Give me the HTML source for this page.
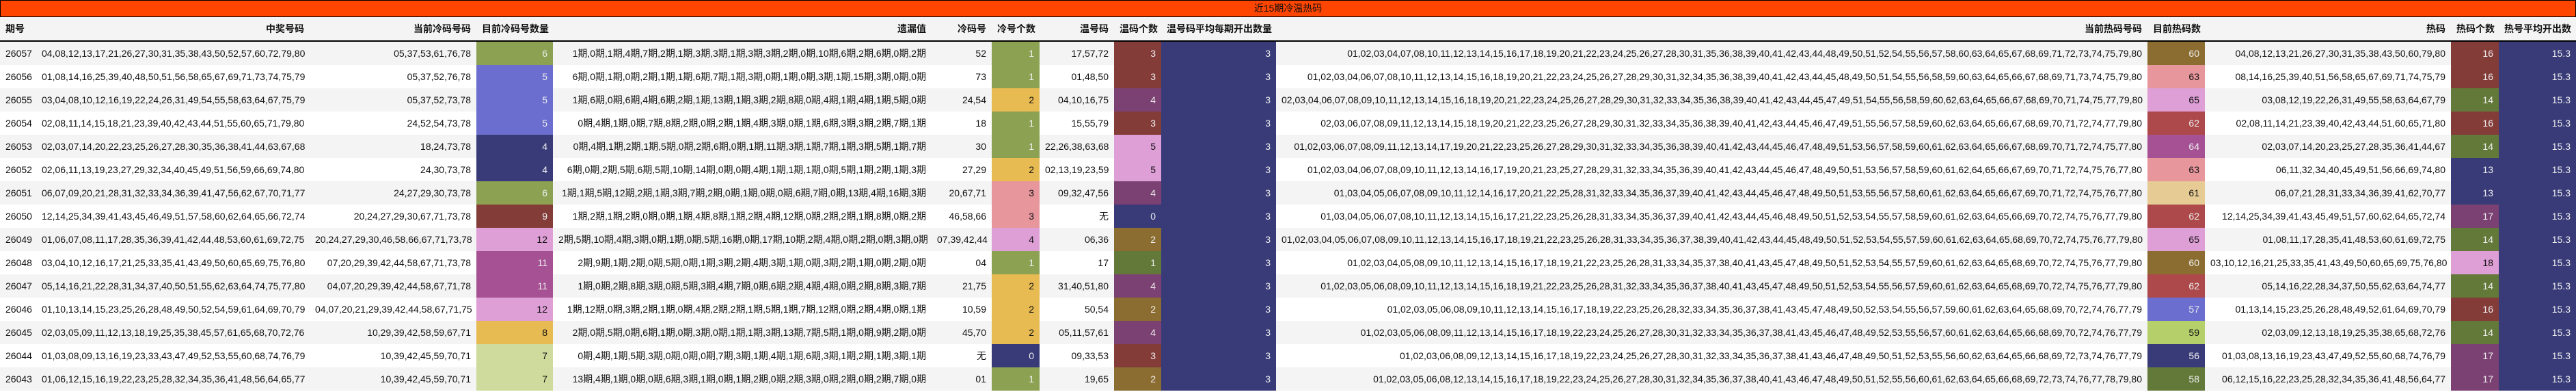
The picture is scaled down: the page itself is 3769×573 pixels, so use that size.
<!DOCTYPE html>
<html><head><meta charset="utf-8"><style>
*{margin:0;padding:0;box-sizing:border-box}
body{width:3769px;height:573px;background:#fff;font-family:"Liberation Sans","Noto Sans CJK SC",sans-serif;font-size:14px;color:#111;overflow:hidden}
.t{height:25px;background:#ff4500;border:1px solid #000;text-align:center;line-height:23px;font-size:14px}
.r{display:flex;height:34px;line-height:34px}
.r:nth-child(odd){background:#f4f4f4}
.hd{height:36px;line-height:34px;border-bottom:2px solid #000;font-weight:bold;background:#fff}
.r>div{padding:0 8px;text-align:right;white-space:nowrap;overflow:visible;flex:none}
.r>div:nth-child(1){width:53px;text-align:left}
.r>div:nth-child(2){width:400px}
.r>div:nth-child(3){width:244px}
.r>div:nth-child(4){width:112px}
.r>div:nth-child(5){width:554px}
.r>div:nth-child(6){width:88px}
.r>div:nth-child(7){width:70px}
.r>div:nth-child(8){width:109px}
.r>div:nth-child(9){width:69px}
.r>div:nth-child(10){width:168px}
.r>div:nth-child(11){width:1275px}
.r>div:nth-child(12){width:84px}
.r>div:nth-child(13){width:360px}
.r>div:nth-child(14){width:70px}
.r>div:nth-child(15){width:113px}
.r>div.a{background:#393b79;color:#eee}.r>div.g{background:#8ca252;color:#eee}.r>div.b{background:#6b6ecf;color:#eee}
.r>div.m{background:#843c39;color:#eee}.r>div.p{background:#de9ed6;color:#111}.r>div.v{background:#a55194;color:#eee}
.r>div.y{background:#e7ba52;color:#111}.r>div.l{background:#cedb9c;color:#111}.r>div.s{background:#e7969c;color:#111}
.r>div.u{background:#7b4173;color:#eee}.r>div.o{background:#8c6d31;color:#eee}.r>div.d{background:#637939;color:#eee}
.r>div.e{background:#ad494a;color:#eee}.r>div.w{background:#e7cb94;color:#111}.r>div.h{background:#b5cf6b;color:#111}
</style></head><body>
<div class="t">近15期冷温热码</div>
<div>
<div class="r hd"><div>期号</div><div>中奖号码</div><div>当前冷码号码</div><div>目前冷码号数量</div><div>遗漏值</div><div>冷码号</div><div>冷号个数</div><div>温号码</div><div>温码个数</div><div>温号码平均每期开出数量</div><div>当前热码号码</div><div>目前热码数</div><div>热码</div><div>热码个数</div><div>热号平均开出数</div></div>
</div>
<div>
<div class="r"><div>26057</div><div>04,08,12,13,17,21,26,27,30,31,35,38,43,50,52,57,60,72,79,80</div><div>05,37,53,61,76,78</div><div class="g">6</div><div>1期,0期,1期,4期,7期,2期,1期,3期,3期,1期,3期,3期,2期,0期,10期,6期,2期,6期,0期,2期</div><div>52</div><div class="g">1</div><div>17,57,72</div><div class="m">3</div><div class="a">3</div><div>01,02,03,04,07,08,10,11,12,13,14,15,16,17,18,19,20,21,22,23,24,25,26,27,28,30,31,35,36,38,39,40,41,42,43,44,48,49,50,51,52,54,55,56,57,58,60,63,64,65,67,68,69,71,72,73,74,75,79,80</div><div class="o">60</div><div>04,08,12,13,21,26,27,30,31,35,38,43,50,60,79,80</div><div class="m">16</div><div class="a">15.3</div></div>
<div class="r"><div>26056</div><div>01,08,14,16,25,39,40,48,50,51,56,58,65,67,69,71,73,74,75,79</div><div>05,37,52,76,78</div><div class="b">5</div><div>6期,0期,1期,0期,2期,1期,1期,6期,7期,1期,3期,0期,1期,0期,3期,1期,15期,3期,0期,0期</div><div>73</div><div class="g">1</div><div>01,48,50</div><div class="m">3</div><div class="a">3</div><div>01,02,03,04,06,07,08,10,11,12,13,14,15,16,18,19,20,21,22,23,24,25,26,27,28,29,30,31,32,34,35,36,38,39,40,41,42,43,44,45,48,49,50,51,54,55,56,58,59,60,63,64,65,66,67,68,69,71,73,74,75,79,80</div><div class="s">63</div><div>08,14,16,25,39,40,51,56,58,65,67,69,71,74,75,79</div><div class="m">16</div><div class="a">15.3</div></div>
<div class="r"><div>26055</div><div>03,04,08,10,12,16,19,22,24,26,31,49,54,55,58,63,64,67,75,79</div><div>05,37,52,73,78</div><div class="b">5</div><div>1期,6期,0期,6期,4期,6期,2期,1期,13期,1期,3期,2期,8期,0期,4期,1期,4期,1期,5期,0期</div><div>24,54</div><div class="y">2</div><div>04,10,16,75</div><div class="u">4</div><div class="a">3</div><div>02,03,04,06,07,08,09,10,11,12,13,14,15,16,18,19,20,21,22,23,24,25,26,27,28,29,30,31,32,33,34,35,36,38,39,40,41,42,43,44,45,47,49,51,54,55,56,58,59,60,62,63,64,65,66,67,68,69,70,71,74,75,77,79,80</div><div class="p">65</div><div>03,08,12,19,22,26,31,49,55,58,63,64,67,79</div><div class="d">14</div><div class="a">15.3</div></div>
<div class="r"><div>26054</div><div>02,08,11,14,15,18,21,23,39,40,42,43,44,51,55,60,65,71,79,80</div><div>24,52,54,73,78</div><div class="b">5</div><div>0期,4期,1期,0期,7期,8期,2期,0期,2期,1期,4期,3期,0期,1期,6期,3期,3期,2期,7期,1期</div><div>18</div><div class="g">1</div><div>15,55,79</div><div class="m">3</div><div class="a">3</div><div>02,03,06,07,08,09,11,12,13,14,15,18,19,20,21,22,23,25,26,27,28,29,30,31,32,33,34,35,36,38,39,40,41,42,43,44,45,46,47,49,51,55,56,57,58,59,60,62,63,64,65,66,67,68,69,70,71,72,74,77,79,80</div><div class="e">62</div><div>02,08,11,14,21,23,39,40,42,43,44,51,60,65,71,80</div><div class="m">16</div><div class="a">15.3</div></div>
<div class="r"><div>26053</div><div>02,03,07,14,20,22,23,25,26,27,28,30,35,36,38,41,44,63,67,68</div><div>18,24,73,78</div><div class="a">4</div><div>0期,4期,1期,2期,1期,5期,0期,2期,6期,0期,1期,11期,3期,1期,7期,1期,3期,5期,1期,7期</div><div>30</div><div class="g">1</div><div>22,26,38,63,68</div><div class="p">5</div><div class="a">3</div><div>01,02,03,06,07,08,09,11,12,13,14,17,19,20,21,22,23,25,26,27,28,29,30,31,32,33,34,35,36,38,39,40,41,42,43,44,45,46,47,48,49,51,53,56,57,58,59,60,61,62,63,64,65,66,67,68,69,70,71,72,74,75,77,80</div><div class="v">64</div><div>02,03,07,14,20,23,25,27,28,35,36,41,44,67</div><div class="d">14</div><div class="a">15.3</div></div>
<div class="r"><div>26052</div><div>02,06,11,13,19,23,27,29,32,34,40,45,49,51,56,59,66,69,74,80</div><div>24,30,73,78</div><div class="a">4</div><div>6期,0期,2期,5期,6期,5期,10期,14期,0期,0期,4期,1期,1期,1期,0期,5期,1期,2期,1期,3期</div><div>27,29</div><div class="y">2</div><div>02,13,19,23,59</div><div class="p">5</div><div class="a">3</div><div>01,02,03,04,06,07,08,09,10,11,12,13,14,16,17,19,20,21,23,25,27,28,29,31,32,33,34,35,36,39,40,41,42,43,44,45,46,47,48,49,50,51,53,56,57,58,59,60,61,62,64,65,66,67,69,70,71,72,74,75,76,77,80</div><div class="s">63</div><div>06,11,32,34,40,45,49,51,56,66,69,74,80</div><div class="a">13</div><div class="a">15.3</div></div>
<div class="r"><div>26051</div><div>06,07,09,20,21,28,31,32,33,34,36,39,41,47,56,62,67,70,71,77</div><div>24,27,29,30,73,78</div><div class="g">6</div><div>1期,1期,5期,12期,2期,1期,3期,7期,2期,0期,1期,0期,0期,6期,7期,0期,13期,4期,16期,3期</div><div>20,67,71</div><div class="s">3</div><div>09,32,47,56</div><div class="u">4</div><div class="a">3</div><div>01,03,04,05,06,07,08,09,10,11,12,14,16,17,20,21,22,25,28,31,32,33,34,35,36,37,39,40,41,42,43,44,45,46,47,48,49,50,51,53,55,56,57,58,60,61,62,63,64,65,66,67,69,70,71,72,74,75,76,77,80</div><div class="w">61</div><div>06,07,21,28,31,33,34,36,39,41,62,70,77</div><div class="a">13</div><div class="a">15.3</div></div>
<div class="r"><div>26050</div><div>12,14,25,34,39,41,43,45,46,49,51,57,58,60,62,64,65,66,72,74</div><div>20,24,27,29,30,67,71,73,78</div><div class="m">9</div><div>1期,2期,1期,2期,0期,0期,1期,4期,8期,1期,2期,4期,12期,0期,2期,2期,1期,8期,0期,2期</div><div>46,58,66</div><div class="s">3</div><div>无</div><div class="a">0</div><div class="a">3</div><div>01,03,04,05,06,07,08,10,11,12,13,14,15,16,17,21,22,23,25,26,28,31,33,34,35,36,37,39,40,41,42,43,44,45,46,48,49,50,51,52,53,54,55,57,58,59,60,61,62,63,64,65,66,69,70,72,74,75,76,77,79,80</div><div class="e">62</div><div>12,14,25,34,39,41,43,45,49,51,57,60,62,64,65,72,74</div><div class="u">17</div><div class="a">15.3</div></div>
<div class="r"><div>26049</div><div>01,06,07,08,11,17,28,35,36,39,41,42,44,48,53,60,61,69,72,75</div><div>20,24,27,29,30,46,58,66,67,71,73,78</div><div class="p">12</div><div>2期,5期,10期,4期,3期,0期,1期,0期,5期,16期,0期,17期,10期,2期,4期,0期,2期,0期,3期,0期</div><div>07,39,42,44</div><div class="p">4</div><div>06,36</div><div class="o">2</div><div class="a">3</div><div>01,02,03,04,05,06,07,08,09,10,11,12,13,14,15,16,17,18,19,21,22,23,25,26,28,31,33,34,35,36,37,38,39,40,41,42,43,44,45,48,49,50,51,52,53,54,55,57,59,60,61,62,63,64,65,68,69,70,72,74,75,76,77,79,80</div><div class="p">65</div><div>01,08,11,17,28,35,41,48,53,60,61,69,72,75</div><div class="d">14</div><div class="a">15.3</div></div>
<div class="r"><div>26048</div><div>03,04,10,12,16,17,21,25,33,35,41,43,49,50,60,65,69,75,76,80</div><div>07,20,29,39,42,44,58,67,71,73,78</div><div class="v">11</div><div>2期,9期,1期,2期,0期,5期,0期,1期,3期,2期,4期,3期,1期,0期,3期,2期,1期,0期,2期,0期</div><div>04</div><div class="g">1</div><div>17</div><div class="d">1</div><div class="a">3</div><div>01,02,03,04,05,08,09,10,11,12,13,14,15,16,17,18,19,21,22,23,25,26,28,31,33,34,35,37,38,40,41,43,45,47,48,49,50,51,52,53,54,55,57,59,60,61,62,63,64,65,68,69,70,72,74,75,76,77,79,80</div><div class="o">60</div><div>03,10,12,16,21,25,33,35,41,43,49,50,60,65,69,75,76,80</div><div class="p">18</div><div class="a">15.3</div></div>
<div class="r"><div>26047</div><div>05,14,16,21,22,28,31,34,37,40,50,51,55,62,63,64,74,75,77,80</div><div>04,07,20,29,39,42,44,58,67,71,78</div><div class="v">11</div><div>1期,0期,2期,8期,3期,0期,5期,3期,4期,7期,0期,6期,2期,4期,4期,0期,2期,8期,3期,7期</div><div>21,75</div><div class="y">2</div><div>31,40,51,80</div><div class="u">4</div><div class="a">3</div><div>01,02,03,05,06,08,09,10,11,12,13,14,15,16,18,19,21,22,23,25,26,28,31,32,33,34,35,36,37,38,40,41,43,45,47,48,49,50,51,52,53,54,55,56,57,59,60,61,62,63,64,65,68,69,70,72,74,75,76,77,79,80</div><div class="e">62</div><div>05,14,16,22,28,34,37,50,55,62,63,64,74,77</div><div class="d">14</div><div class="a">15.3</div></div>
<div class="r"><div>26046</div><div>01,10,13,14,15,23,25,26,28,48,49,50,52,54,59,61,64,69,70,79</div><div>04,07,20,21,29,39,42,44,58,67,71,75</div><div class="p">12</div><div>1期,12期,0期,3期,2期,1期,0期,4期,2期,2期,1期,5期,1期,7期,12期,0期,2期,4期,0期,1期</div><div>10,59</div><div class="y">2</div><div>50,54</div><div class="o">2</div><div class="a">3</div><div>01,02,03,05,06,08,09,10,11,12,13,14,15,16,17,18,19,22,23,25,26,28,32,33,34,35,36,37,38,41,43,45,47,48,49,50,52,53,54,55,56,57,59,60,61,62,63,64,65,68,69,70,72,74,76,77,79</div><div class="b">57</div><div>01,13,14,15,23,25,26,28,48,49,52,61,64,69,70,79</div><div class="m">16</div><div class="a">15.3</div></div>
<div class="r"><div>26045</div><div>02,03,05,09,11,12,13,18,19,25,35,38,45,57,61,65,68,70,72,76</div><div>10,29,39,42,58,59,67,71</div><div class="y">8</div><div>2期,0期,5期,0期,6期,1期,0期,3期,0期,1期,1期,3期,13期,7期,5期,1期,0期,9期,2期,0期</div><div>45,70</div><div class="y">2</div><div>05,11,57,61</div><div class="u">4</div><div class="a">3</div><div>01,02,03,05,06,08,09,11,12,13,14,15,16,17,18,19,22,23,24,25,26,27,28,30,31,32,33,34,35,36,37,38,41,43,45,46,47,48,49,52,53,55,56,57,60,61,62,63,64,65,66,68,69,70,72,74,76,77,79</div><div class="h">59</div><div>02,03,09,12,13,18,19,25,35,38,65,68,72,76</div><div class="d">14</div><div class="a">15.3</div></div>
<div class="r"><div>26044</div><div>01,03,08,09,13,16,19,23,33,43,47,49,52,53,55,60,68,74,76,79</div><div>10,39,42,45,59,70,71</div><div class="l">7</div><div>0期,4期,1期,5期,3期,0期,0期,0期,7期,3期,1期,4期,1期,6期,3期,1期,2期,1期,3期,1期</div><div>无</div><div class="a">0</div><div>09,33,53</div><div class="m">3</div><div class="a">3</div><div>01,02,03,06,08,09,12,13,14,15,16,17,18,19,22,23,24,25,26,27,28,30,31,32,33,34,35,36,37,38,41,43,46,47,48,49,50,51,52,53,55,56,60,62,63,64,65,66,68,69,72,73,74,76,77,79</div><div class="a">56</div><div>01,03,08,13,16,19,23,43,47,49,52,55,60,68,74,76,79</div><div class="u">17</div><div class="a">15.3</div></div>
<div class="r"><div>26043</div><div>01,06,12,15,16,19,22,23,25,28,32,34,35,36,41,48,56,64,65,77</div><div>10,39,42,45,59,70,71</div><div class="l">7</div><div>13期,4期,1期,0期,0期,6期,3期,1期,0期,1期,2期,0期,2期,3期,0期,2期,0期,2期,7期,0期</div><div>01</div><div class="g">1</div><div>19,65</div><div class="o">2</div><div class="a">3</div><div>01,02,03,05,06,08,12,13,14,15,16,17,18,19,22,23,24,25,26,27,28,30,31,32,34,35,36,37,38,40,41,43,46,47,48,49,50,51,52,55,56,60,61,62,63,64,65,66,68,69,72,73,74,76,77,78,79,80</div><div class="d">58</div><div>06,12,15,16,22,23,25,28,32,34,35,36,41,48,56,64,77</div><div class="u">17</div><div class="a">15.3</div></div>
</div>
</body></html>
